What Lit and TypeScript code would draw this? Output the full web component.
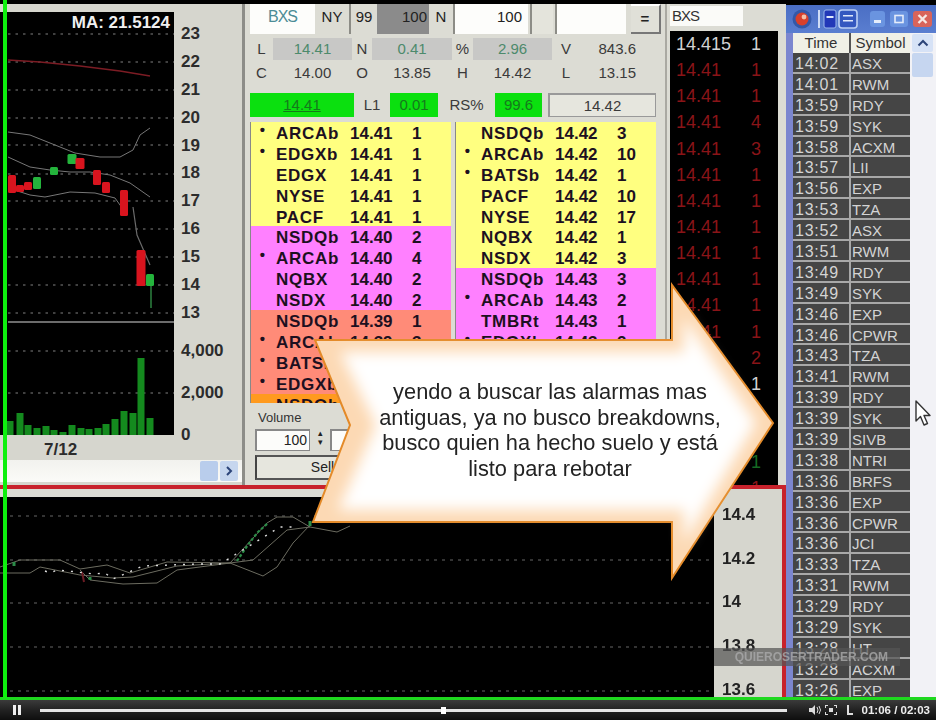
import { LitElement, html, css, svg } from "lit";
import { customElement } from "lit/decorators.js";

const leftBook: [string, string, string, string, string][] = [
  ["y", "•", "ARCAb", "14.41", "1"], ["y", "•", "EDGXb", "14.41", "1"], ["y", "", "EDGX", "14.41", "1"], ["y", "", "NYSE", "14.41", "1"], ["y", "", "PACF", "14.41", "1"],
  ["m", "", "NSDQb", "14.40", "2"], ["m", "•", "ARCAb", "14.40", "4"], ["m", "", "NQBX", "14.40", "2"], ["m", "", "NSDX", "14.40", "2"],
  ["s", "", "NSDQb", "14.39", "1"], ["s", "•", "ARCAb", "14.39", "3"], ["s", "•", "BATSb", "14.39", "1"], ["s", "•", "EDGXb", "14.39", "1"],
  ["o", "", "NSDQb", "14.38", "2"],
];
const rightBook: [string, string, string, string, string][] = [
  ["y", "", "NSDQb", "14.42", "3"], ["y", "•", "ARCAb", "14.42", "10"], ["y", "•", "BATSb", "14.42", "1"], ["y", "", "PACF", "14.42", "10"], ["y", "", "NYSE", "14.42", "17"], ["y", "", "NQBX", "14.42", "1"], ["y", "", "NSDX", "14.42", "3"],
  ["m", "", "NSDQb", "14.43", "3"], ["m", "•", "ARCAb", "14.43", "2"], ["m", "", "TMBRt", "14.43", "1"], ["m", "•", "EDGXb", "14.43", "2"],
];
const tape: [string, string, string][] = [
  ["14.415", "1", "w"], ["14.41", "1", "r"], ["14.41", "1", "r"], ["14.41", "4", "r"], ["14.41", "3", "r"], ["14.41", "1", "r"], ["14.41", "1", "r"], ["14.41", "1", "r"], ["14.41", "1", "r"], ["14.41", "1", "r"], ["14.41", "1", "r"], ["14.41", "1", "r"], ["", "2", "r"], ["", "1", "w"], ["", "1", "r"], ["", "1", "r"], ["", "1", "g"], ["", "1", "r"],
];
const alerts = "14:02 ASX,14:01 RWM,13:59 RDY,13:59 SYK,13:58 ACXM,13:57 LII,13:56 EXP,13:53 TZA,13:52 ASX,13:51 RWM,13:49 RDY,13:49 SYK,13:46 EXP,13:46 CPWR,13:43 TZA,13:41 RWM,13:39 RDY,13:39 SYK,13:39 SIVB,13:38 NTRI,13:36 BRFS,13:36 EXP,13:36 CPWR,13:36 JCI,13:33 TZA,13:31 RWM,13:29 RDY,13:29 SYK,13:28 HT,13:28 ACXM,13:26 EXP"
  .split(",").map((s) => s.split(" "));

const priceLabels = ["23", "22", "21", "20", "19", "18", "17", "16", "15", "14", "13"];
const gridYs = [34, 62, 90, 118, 145, 174, 201, 229, 257, 285, 313, 351, 393];
const candles: [number, number, number, number, string][] = [
  [12, 175, 8, 18, "r"], [20, 185, 8, 7, "r"], [28, 182, 8, 8, "r"], [37, 177, 8, 12, "g"], [54, 167, 8, 8, "g"], [72, 154, 9, 10, "g"], [80, 158, 9, 11, "r"], [97, 170, 8, 15, "r"], [106, 182, 8, 11, "r"], [124, 190, 8, 26, "r"], [141, 250, 9, 36, "r"], [150, 274, 8, 12, "g"],
];
const bars: [number, number][] = [[10, 421], [20, 413], [28, 425], [37, 428], [46, 426], [54, 430], [63, 432], [72, 425], [81, 428], [89, 429], [98, 428], [106, 424], [115, 419], [124, 411], [133, 413], [141, 358], [150, 418]];

@customElement("app-root")
export class AppRoot extends LitElement {
  static styles = css`
    :host { display: block; width: 936px; height: 720px; overflow: hidden; background: #000; font-family: "Liberation Sans", Arial, sans-serif; color: #222; }
    .screen { position: relative; width: 936px; height: 720px; display: grid; grid-template-rows: 4px 693px 3px 20px; overflow: hidden; filter: blur(0.7px); }
    .desk { display: grid; grid-template-columns: 786px 150px; min-height: 0; }
    .work { display: grid; grid-template-rows: 481px 4px 208px; min-height: 0; }
    .upper { display: grid; grid-template-columns: 245px 420px 121px; min-height: 0; }
    .red { background: #c8222c; }

    /* chart window */
    .chartwin { background: #d6d6ce; padding-top: 8px; display: grid; grid-template-columns: 174px 1fr; grid-template-rows: 423px 25px 22px; border-right: 3px solid #8d8d88; box-sizing: border-box; }
    .chartwin svg { display: block; }
    .matext { font-family: "Liberation Sans", Arial, sans-serif; font-size: 17px; font-weight: 700; fill: #f0f0f0; }
    .axis { padding: 8px 0 0 7px; font-size: 17px; font-weight: 700; color: #2c2c2c; height: 423px; box-sizing: border-box; }
    .axis div { height: 27.9px; line-height: 27.9px; }
    .axis .vols { padding-top: 3px; }
    .axis .vols div { height: 42px; line-height: 42px; }
    .date { font-size: 17px; font-weight: 700; padding-left: 44px; line-height: 30px; color: #2c2c2c; }
    .hscroll { grid-column: 1 / span 2; background: linear-gradient(#f2f2ee, #fbfbf8); display: flex; justify-content: flex-end; gap: 2px; padding: 1px 4px 1px 0; box-sizing: border-box; }
    .hscroll i { display: block; width: 18px; background: #b9cdec; border-radius: 2px; }
    .hscroll b { display: flex; align-items: center; justify-content: center; width: 18px; background: #c6d6ee; border-radius: 2px; }

    /* order panel */
    .panel { background: #dcdcd4; box-sizing: border-box; padding: 0 9px 0 5px; font-size: 15px; }
    .top { display: grid; grid-template-columns: 65px 34px 28px 52px 24px 75px 27px 71px 1fr; height: 28px; align-items: stretch; text-align: center; line-height: 26px; font-size: 15px; }
    .white { background: #fdfdfb; }
    .bxs { color: #4c8c96; font-size: 16px; letter-spacing: -1px; }
    .bar-l { border-left: 2px solid #8c8c86; }
    .dark { background: #8b8b8b; text-align: right; padding-right: 2px; color: #222; }
    .num { text-align: right; padding-right: 6px; }
    .pad { background: #e4e4dc; margin: 0 2px; }
    .eq { border-top: 2px solid #fff; border-right: 2px solid #777; border-bottom: 2px solid #777; background: #e0e0d8; font-weight: 700; margin: 0 -5px 0 5px; }
    .quote { display: grid; grid-template-columns: 23px 79px 20px 80px 21px 79px 28px 1fr; margin-top: 6px; line-height: 22px; text-align: center; color: #3a3a3a; }
    .quote + .quote { margin-top: 0; line-height: 25px; }
    .ro { background: #c8c8c6; color: #4d8a6c; }
    .quote .end { text-align: right; padding-right: 20px; }
    .lvl { display: grid; grid-template-columns: 104px 36px 48px 57px 47px 6px 1fr; height: 24px; margin-top: 8px; line-height: 24px; text-align: center; color: #3a3a3a; }
    .lvl .on { background: #0be00f; color: #157a1c; }
    .lvl u { text-decoration: underline; }
    .wide { border: 1px solid #999; border-left-width: 2px; border-top-width: 2px; background: #e6e6de; line-height: 21px; box-sizing: border-box; }
    .books { display: grid; grid-template-columns: 201px 201px; gap: 4px; margin-top: 5px; height: 281px; overflow: hidden; }
    .book { overflow: hidden; border-left: 1px solid #888; }
    .row { display: grid; grid-template-columns: 25px 74px 62px 1fr; height: 20.9px; padding-top: 1px; box-sizing: border-box; line-height: 21.9px; font-size: 17px; font-weight: 700; color: #1d1020; }
    .row .sym { letter-spacing: 0.7px; }
    .row .dot { text-align: right; padding-right: 11px; font-size: 15px; line-height: 14px; }
    .y { background: #ffff80; } .m { background: #ff80ff; } .s { background: #ff8b78; } .o { background: #ff9a1e; }
    .order { padding: 6px 0 0 5px; }
    .order .lab { font-size: 13px; color: #333; line-height: 17px; padding-left: 3px; }
    .order .inputs { display: flex; margin-top: 3px; height: 22px; }
    .field { width: 55px; border: 1px solid #888; border-left-width: 2px; border-top-width: 2px; box-sizing: border-box; background: #fcfcfa; text-align: right; padding-right: 2px; font-size: 14px; line-height: 19px; }
    .spin { width: 20px; font-size: 9px; line-height: 9px; text-align: center; }
    .sell { margin-top: 4px; width: 135px; height: 25px; box-sizing: border-box; border: 2px solid #555; border-left-color: #444; background: #e6e6de; text-align: center; font-size: 14px; line-height: 21px; }

    /* time and sales */
    .tas { background: #dcdcd4; padding-left: 3px; display: flex; flex-direction: column; min-height: 0; box-sizing: border-box; border-left: 2px solid #aaa9a2; }
    .tasin { width: 73px; height: 20px; margin-top: 2px; background: #fbfbf8; font-size: 15px; letter-spacing: -1px; line-height: 20px; padding-left: 2px; box-sizing: border-box; color: #333; flex: none; }
    .tape { margin-top: 5px; width: 108px; height: 454px; background: #000; overflow: hidden; padding: 0 17px 0 6px; box-sizing: border-box; flex: none; }
    .tape div { display: flex; justify-content: space-between; height: 26.15px; line-height: 26.15px; font-size: 18px; }
    .tape .w { color: #d2d2d2; } .tape .r { color: #8a1418; } .tape .g { color: #156a24; }

    /* lower chart */
    .lower { display: grid; grid-template-columns: 714px 1fr; border-right: 4px solid #c8222c; min-height: 0; }
    .lowchart { border-top: 8px solid #dcdcd4; background: #000; overflow: hidden; }
    .lowchart svg { display: block; }
    .lowaxis { background: #d6d6ce; padding: 4px 0 0 8px; font-size: 17px; font-weight: 700; color: #222; overflow: hidden; }
    .lowaxis div { height: 43.7px; line-height: 43.7px; }

    /* alerts window */
    .alerts { background: #f2f2f6; border-left: 7px solid #7b86cf; display: grid; grid-template-rows: 28px 1fr; min-height: 0; margin-top: 1px; }
    .title { margin-left: -7px; background: linear-gradient(#4a6ec4, #5a7ed0); display: flex; align-items: center; padding-left: 6px; }
    .title .tick { width: 2px; height: 18px; margin: 0 3px 0 6px; background: #cfdcf6; }
    .tbl { display: grid; grid-template-columns: 117px 1fr; min-height: 0; overflow: hidden; }
    .rows { overflow: hidden; }
    .head { display: grid; grid-template-columns: 56px 1fr; height: 20px; line-height: 20px; font-size: 15px; color: #333; text-align: center; background: #f0f0e6; }
    .head span + span { border-left: 2px solid #555; }
    .al { display: grid; grid-template-columns: 56px 1fr; height: 20.9px; line-height: 21px; box-sizing: border-box; border-bottom: 2px solid #a8a8a8; background: #454545; color: #d4d4d4; }
    .al .t { font-size: 16px; letter-spacing: 0.75px; padding-left: 2px; }
    .al .n { font-size: 15px; border-left: 2px solid #a8a8a8; padding-left: 1px; }
    .vscroll { padding: 1px 3px 0 2px; }
    .vscroll .up { height: 18px; background: #d6e2f6; border-radius: 2px; display: flex; align-items: center; justify-content: center; }
    .vscroll .th { height: 24px; margin-top: 1px; background: #c6d6f0; border-radius: 2px; }

    /* player */
    .green { background: #1fd81f; }
    .player { background: linear-gradient(#3b3b3b, #242424 45%, #0e0e0e); display: flex; align-items: center; padding: 0 6px 0 13px; color: #eee; }
    .pause { display: flex; gap: 2px; width: 27px; }
    .pause i { display: block; width: 3px; height: 10px; background: #eee; }
    .track { position: relative; width: 747px; height: 3px; background: #e4e4e4; flex: none; }
    .knob { position: absolute; left: 401px; top: -2px; width: 5px; height: 7px; background: #fff; }
    .ctl { display: flex; align-items: center; margin-left: auto; }
    .ctl .fs { margin: 0 9px 0 4px; }
    .clock { font-size: 11.5px; font-weight: 700; margin-left: 8px; white-space: nowrap; }

    /* overlays */
    .vline { position: absolute; left: 3px; top: 0; width: 4px; height: 698px; background: #0ef00e; }
    .arrow { position: absolute; left: 300px; top: 280px; overflow: visible; }
    .say { position: absolute; left: 370px; top: 379px; width: 360px; text-align: center; font-size: 21.8px; line-height: 25.5px; color: #232323; }
    .mark { position: absolute; left: 714px; top: 648px; width: 186px; height: 18px; background: rgba(85, 85, 85, 0.72); color: rgba(170, 170, 170, 0.8); font-size: 12px; font-weight: 700; line-height: 18px; text-align: right; padding-right: 12px; box-sizing: border-box; }
    .cursor { position: absolute; left: 914px; top: 400px; }
  `;

  private bookRows(rows: [string, string, string, string, string][]) {
    return rows.map(([c, d, s, p, q]) => html`<div class="row ${c}"><span class="dot">${d}</span><span class="sym">${s}</span><span>${p}</span><span>${q}</span></div>`);
  }

  private upperChart() {
    return html`<svg width="174" height="423" viewBox="0 12 174 423">
      <rect x="0" y="12" width="174" height="423" fill="#000"/>
      <text class="matext" x="170" y="28" text-anchor="end">MA: 21.5124</text>
      ${gridYs.map((y) => svg`<line x1="8" x2="174" y1=${y} y2=${y} stroke="#808080" stroke-width="1" stroke-dasharray="2.5 5"/>`)}
      <polyline points="8,60 40,62 80,66 120,71 150,76" fill="none" stroke="#7c1c24" stroke-width="1.6"/>
      <polyline points="8,132 30,135 50,143 75,153 100,157 120,157 133,150 140,135 150,128" fill="none" stroke="#777" stroke-width="1"/>
      <polyline points="8,157 30,167 50,170 70,172 90,172 110,175 130,183 150,197" fill="none" stroke="#777" stroke-width="1"/>
      <polyline points="8,188 30,195 45,197 70,192 95,193 115,198 125,212" fill="none" stroke="#777" stroke-width="1"/>
      <polyline points="133,207 137,235 150,265" fill="none" stroke="#6a6a6a" stroke-width="1.2"/>
      <line x1="151" x2="151" y1="280" y2="308" stroke="#2a7a3c" stroke-width="1.6"/>
      ${candles.map(([x, y, w, h, c]) => svg`<rect x=${x - w / 2} y=${y} width=${w} height=${h} rx="1.5" fill=${c === "r" ? "#d8141e" : "#24b43c"}/>`)}
      <line x1="8" x2="174" y1="322" y2="322" stroke="#d8d8d8" stroke-width="1.2"/>
      ${bars.map(([x, y]) => svg`<rect x=${x - 3.5} y=${y} width="7" height=${435 - y} fill="#148a1e"/>`)}
    </svg>`;
  }

  private lowerChart() {
    return html`<svg width="714" height="200" viewBox="0 497 714 200">
      ${[516, 560, 603, 647, 691].map((y) => svg`<line x1="10" x2="714" y1=${y} y2=${y} stroke="#666" stroke-width="1" stroke-dasharray="3 5"/>`)}
      <polyline points="0,567 20,560 60,560 80,569 107,565 130,573 167,562 230,563 267,523 277,517 293,517 310,527 337,532 350,526" fill="none" stroke="#6c6c60" stroke-width="1"/>
      <polyline points="0,573 30,573 40,567 80,575 113,578 133,577 177,566 230,563 253,560 287,530 310,527" fill="none" stroke="#6c6c60" stroke-width="1"/>
      <polyline points="80,570 90,580 123,584 157,583 177,570 230,563 263,576 277,567 293,543 310,525" fill="none" stroke="#6c6c60" stroke-width="1"/>
      <polyline points="237,561 243,552 250,542 258,532 268,523" fill="none" stroke="#2c8c48" stroke-width="2.2" stroke-dasharray="3 2"/>
      <polyline points="14,562 14,566" stroke="#2c8c48" stroke-width="3" fill="none"/>
      <polyline points="82,572 84,582" stroke="#6c1c24" stroke-width="2" fill="none"/>
      <polyline points="90,577 90,580" stroke="#2c8c48" stroke-width="3" fill="none"/>
      <polyline points="310,521 310,526" stroke="#2c8c48" stroke-width="3" fill="none"/>
      <polyline points="45,571 50,573 57,570 68,571 94,574 105,573 113,579 143,566 197,564 220,564 280,527 295,527" fill="none" stroke="#ddd" stroke-width="1.4" stroke-dasharray="2 7"/>
    </svg>`;
  }

  private arrow() {
    const pts = "15,60 50,145 13,242 372,242 372,298 473,143 372,5 372,60";
    const inner = "40,72 76,145 38,230 384,230 384,262 456,143 384,38 384,72";
    return html`<svg class="arrow" width="480" height="310" viewBox="0 0 480 310">
      <defs><filter id="soft" x="-10%" y="-15%" width="120%" height="130%"><feGaussianBlur stdDeviation="7"/></filter></defs>
      <polygon points=${pts} fill="#fcd9b4" stroke="#e48a28" stroke-width="2" stroke-linejoin="miter"/>
      <polygon points=${inner} fill="#fff" filter="url(#soft)"/>
    </svg>`;
  }

  render() {
    return html`<div class="screen">
      <div></div>
      <div class="desk">
        <div class="work">
          <div class="upper">
            <div class="chartwin">
              ${this.upperChart()}
              <div class="axis">
                ${priceLabels.map((l) => html`<div>${l}</div>`)}
                <div class="vols"><div>4,000</div><div>2,000</div><div>0</div></div>
              </div>
              <div class="date">7/12</div><div></div>
              <div class="hscroll"><i></i><b><svg width="8" height="12" viewBox="0 0 8 12"><path d="M2 2l4 4-4 4" fill="none" stroke="#2c4478" stroke-width="2"/></svg></b></div>
            </div>
            <div class="panel">
              <div class="top">
                <div class="white bxs">BXS</div><div>NY</div><div class="bar-l">99</div><div class="dark">100</div><div>N</div><div class="white num bar-l">100</div><div class="pad bar-l"></div><div class="white bar-l"></div><div class="eq">=</div>
              </div>
              <div class="quote"><span>L</span><span class="ro">14.41</span><span>N</span><span class="ro">0.41</span><span>%</span><span class="ro">2.96</span><span>V</span><span class="end">843.6</span></div>
              <div class="quote"><span>C</span><span>14.00</span><span>O</span><span>13.85</span><span>H</span><span>14.42</span><span>L</span><span class="end">13.15</span></div>
              <div class="lvl"><span class="on"><u>14.41</u></span><span>L1</span><span class="on">0.01</span><span>RS%</span><span class="on">99.6</span><span></span><span class="wide">14.42</span></div>
              <div class="books">
                <div class="book">${this.bookRows(leftBook)}</div>
                <div class="book">${this.bookRows(rightBook)}</div>
              </div>
              <div class="order">
                <div class="lab">Volume</div>
                <div class="inputs"><div class="field">100</div><div class="spin">▴<br/>▾</div><div class="field"></div></div>
                <div class="sell">Sell</div>
              </div>
            </div>
            <div class="tas">
              <div class="tasin">BXS</div>
              <div class="tape">${tape.map(([p, q, c]) => html`<div class=${c}><span>${p}</span><span>${q}</span></div>`)}</div>
            </div>
          </div>
          <div class="red"></div>
          <div class="lower">
            <div class="lowchart">${this.lowerChart()}</div>
            <div class="lowaxis"><div>14.4</div><div>14.2</div><div>14</div><div>13.8</div><div>13.6</div></div>
          </div>
        </div>
        <div class="alerts">
          <div class="title">
            <svg width="20" height="20" viewBox="0 0 20 20"><circle cx="10" cy="10" r="9.5" fill="#3458a8"/><circle cx="10" cy="10" r="6.5" fill="#d8402c"/><circle cx="12" cy="8" r="2.4" fill="#f4c0a8"/></svg>
            <span class="tick"></span>
            <svg width="14" height="20" viewBox="0 0 14 20"><rect x="1" y="1" width="12" height="18" rx="2" fill="#2238b8" stroke="#9cb8ec"/><rect x="3.5" y="7" width="7" height="2" fill="#dfe8fa"/></svg>
            <svg style="margin-left:1px" width="20" height="20" viewBox="0 0 20 20"><rect x="1" y="1" width="18" height="18" rx="3" fill="#3458c0" stroke="#bcd0f4" stroke-width="1.6"/><rect x="5" y="6" width="10" height="1.5" fill="#dfe8fa"/><rect x="5" y="11" width="10" height="1.5" fill="#dfe8fa"/></svg>
            <svg style="margin-left:12px" width="15" height="20" viewBox="0 0 15 20"><rect y="2" width="15" height="16" rx="3" fill="#6a94e0"/><rect x="4" y="11" width="7" height="3" fill="#e4ecfa"/></svg>
            <svg style="margin-left:5px" width="18" height="20" viewBox="0 0 18 20"><rect y="2" width="18" height="16" rx="3" fill="#6a94e0"/><rect x="5" y="6.5" width="8" height="7" fill="none" stroke="#e4ecfa" stroke-width="1.6"/></svg>
            <svg style="margin-left:5px" width="19" height="20" viewBox="0 0 19 20"><rect y="2" width="19" height="16" rx="3" fill="#d8645a"/><path d="M5.5 6l8 8M13.5 6l-8 8" stroke="#f6e8e4" stroke-width="2.4"/></svg>
          </div>
          <div class="tbl">
            <div class="rows">
              <div class="head"><span>Time</span><span>Symbol</span></div>
              ${alerts.map(([t, n]) => html`<div class="al"><span class="t">${t}</span><span class="n">${n}</span></div>`)}
            </div>
            <div class="vscroll">
              <div class="up"><svg width="12" height="8" viewBox="0 0 12 8"><path d="M1.5 6.5L6 2l4.5 4.5" fill="none" stroke="#2c4478" stroke-width="2"/></svg></div>
              <div class="th"></div>
            </div>
          </div>
        </div>
      </div>
      <div class="green"></div>
      <div class="player">
        <div class="pause"><i></i><i></i></div>
        <div class="track"><div class="knob"></div></div>
        <div class="ctl">
          <svg width="12" height="10" viewBox="0 0 12 10"><path d="M0 3h3l3-3v10L3 7H0z" fill="#ddd"/><path d="M8 2q2 3 0 6M10 1q3 4 0 8" fill="none" stroke="#ddd"/></svg>
          <svg class="fs" width="12" height="10" viewBox="0 0 12 10"><path d="M0 0h3v1H1v2H0zM12 0H9v1h2v2h1zM0 10h3V9H1V7H0zM12 10H9V9h2V7h1zM4 3h4v4H4z" fill="#ddd"/></svg>
          <svg width="8" height="10" viewBox="0 0 8 10"><path d="M1 0h2v8h4v2H1z" fill="#ddd"/></svg>
          <span class="clock">01:06 / 02:03</span>
        </div>
      </div>
      <div class="vline"></div>
      ${this.arrow()}
      <div class="say">yendo a buscar las alarmas mas antiguas, ya no busco breakdowns, busco quien ha hecho suelo y está listo para rebotar</div>
      <div class="mark">QUIEROSERTRADER.COM</div>
      <svg class="cursor" width="18" height="28" viewBox="0 0 18 28"><path d="M2 1v20l4.5-4.5L10 25l3.5-1.5-3.5-8h6z" fill="#fff" stroke="#333" stroke-width="1.4" stroke-linejoin="round"/></svg>
    </div>`;
  }
}
